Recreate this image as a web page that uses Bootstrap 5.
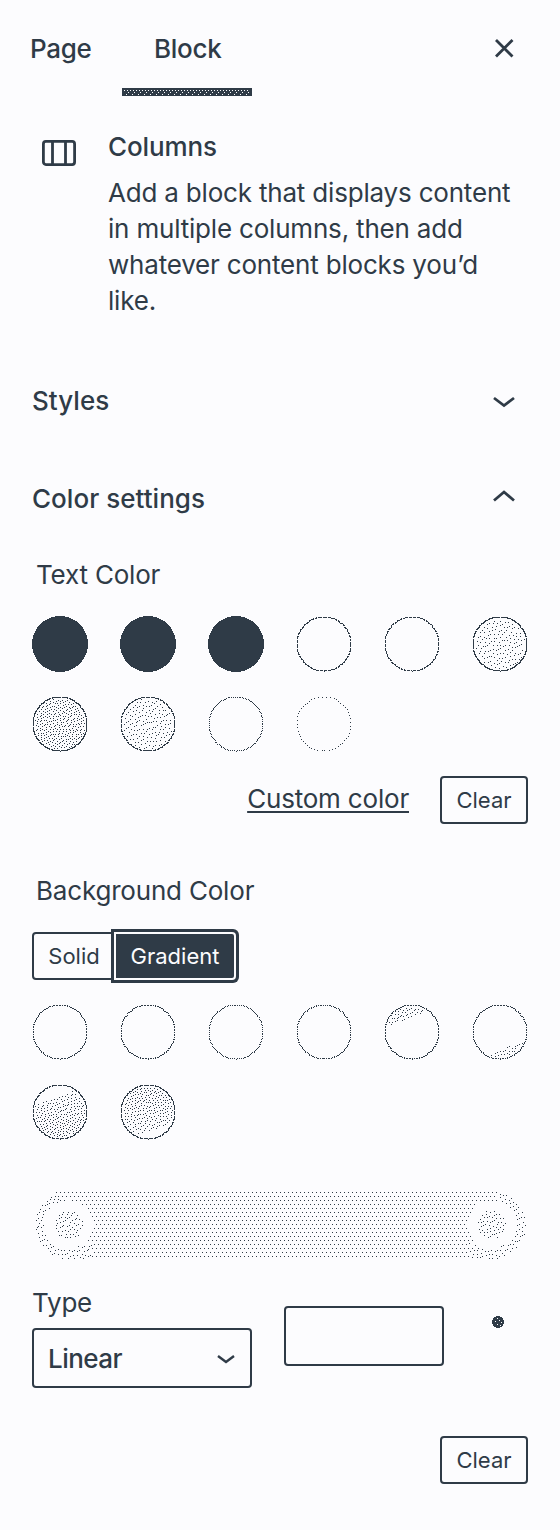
<!DOCTYPE html>
<html lang="en">
<head>
<meta charset="utf-8">
<meta name="viewport" content="width=device-width, initial-scale=1">
<title>Block settings</title>
<link href="https://cdn.jsdelivr.net/npm/bootstrap@5.3.0/dist/css/bootstrap.min.css" rel="stylesheet">
<style>
:root{--ink:#2f3b47;--paper:#fcfcfe}
body{background:var(--paper);color:var(--ink);font-family:Inter,"Liberation Sans",sans-serif;font-size:26px;line-height:36px;letter-spacing:-.19px;height:1530px;overflow:hidden}
svg{display:block;flex:none}
button{letter-spacing:inherit}
.semi{font-weight:500;letter-spacing:-.12px}
.tabs-top{height:96px}
.tab-item{background:none;border:0;color:inherit;height:96px;width:122px;padding:31px 0 0 30px;position:relative;display:flex;align-items:flex-start;letter-spacing:-.3px}
.tab-item.current{width:130px;padding-left:32px}
.tab-item svg{position:absolute;left:0;bottom:0}
.close-icon{margin:36px 44px 0 0}
.intro{padding:32px 32px 0 42px;height:255px;gap:32px}
.intro-title{padding-top:1px}
.panel-head{height:98px;padding:0 44px 0 32px;font-weight:500;letter-spacing:.03px}
.panel-head span{padding-top:2px}
.controls{padding:10px 32px 0}
.swatches{display:grid;grid-template-columns:repeat(6,56px);column-gap:32px;row-gap:24px}
.box{border:2px solid var(--ink);border-radius:4px;background:var(--paper);color:var(--ink)}
.btn-sm2{font-size:22px;line-height:44px;height:48px;padding:0;text-align:center;letter-spacing:0}
.clear-btn{width:88px}
.custom{text-decoration:underline;text-decoration-thickness:2px;text-underline-offset:3px;text-decoration-skip-ink:none;color:inherit}
.solid-btn{width:84px;border-radius:4px 0 0 4px}
.grad-btn{width:118px;height:44px;line-height:44px;margin:2px 0 0;border:0;background:var(--ink);color:var(--paper);border-radius:1px;box-shadow:0 0 0 2px var(--paper),0 0 0 5px var(--ink);position:relative}
.grad-btn{border-radius:0 2px 2px 0}
.type-select{width:220px;height:60px;padding:2px 14px 0;font-weight:450;letter-spacing:-.55px}
.angle-input{width:160px;height:60px;margin-top:21px}
</style>
</head>
<body>
<header class="tabs-top d-flex justify-content-between">
  <div class="d-flex" role="tablist">
    <button class="tab-item semi" role="tab">Page</button>
    <button class="tab-item current semi" role="tab">Block
      <svg width="130" height="8" shape-rendering="crispEdges"><defs><pattern id="speck" width="6" height="6" patternUnits="userSpaceOnUse"><path d="M2 2h1v1h-1zM5 2h1v1h-1zM0 4h1v1h-1zM4 0h1v1h-1z" fill="#fcfcfe"/></pattern></defs><path d="M0 0h130v8H0z" fill="#2f3b47"/><path d="M2 1h126v6H2z" fill="url(#speck)"/></svg>
    </button>
  </div>
  <svg class="close-icon" width="24" height="24" fill="none" stroke="#2f3b47" stroke-width="2.800"><path d="M4 4l16.500 16.500M20.500 4L4 20.500"/></svg>
</header>
<section class="intro d-flex">
  <svg class="mt-2" width="34" height="34" viewBox="0 0 34 34" fill="none" stroke="#2f3b47" stroke-width="2.800"><rect x="1.400" y="5.400" width="31.200" height="23.200" rx="2.500"/><path d="M10.500 5v24M23.500 5v24"/></svg>
  <div>
    <div class="semi intro-title">Columns</div>
    <p class="mb-0" style="margin-top:10px">Add a block that displays content<br>in multiple columns, then add<br>whatever content blocks you’d<br>like.</p>
  </div>
</section>
<section class="panel-head d-flex justify-content-between align-items-center"><span>Styles</span>
  <svg width="24" height="24" fill="none" stroke="#2f3b47" stroke-width="2.800"><path d="M2 10l10 7.500L22 10"/></svg></section>
<section class="panel-head d-flex justify-content-between align-items-center"><span>Color settings</span>
  <svg width="24" height="24" fill="none" stroke="#2f3b47" stroke-width="2.800"><path d="M2 14.500L12 6l10 8.500"/></svg></section>
<main class="controls">
  <div style="padding-left:4px;margin-bottom:23px">Text Color</div>
  <div class="swatches" id="textSwatches"></div>
  <div class="d-flex justify-content-end" style="margin-top:24px;gap:31px">
    <a class="custom" href="#" style="margin-top:5px">Custom color</a>
    <button class="box btn-sm2 clear-btn">Clear</button>
  </div>
  <div style="padding-left:4px;margin:49px 0 23px">Background Color</div>
  <div class="d-flex" style="height:48px">
    <button class="box btn-sm2 solid-btn">Solid</button>
    <button class="btn-sm2 grad-btn">Gradient</button>
  </div>
  <div class="swatches" id="bgSwatches" style="margin-top:24px"></div>
  <svg id="gradientBar" width="496" height="72" shape-rendering="crispEdges" style="margin-top:48px"></svg>
  <div class="d-flex" style="margin-top:25px">
    <div style="width:252px"><label class="d-block" for="gtype" style="margin-bottom:7px">Type</label>
      <button id="gtype" class="box type-select d-flex align-items-center justify-content-between">Linear
        <svg width="20" height="20" fill="none" stroke="#2f3b47" stroke-width="2.400"><path d="M2 7l8 6 8-6"/></svg></button></div>
    <input class="box angle-input" aria-label="Angle">
    <svg width="12" height="12" style="margin:31px 0 0 48px" shape-rendering="crispEdges"><circle cx="6" cy="6" r="6" fill="#2f3b47"/><path d="M5 2h1v1h-1zM3 5h1v1h-1zM7 4h1v1h-1zM9 6h1v1h-1zM5 8h1v1h-1zM8 9h1v1h-1z" fill="#fcfcfe"/></svg>
  </div>
  <div class="d-flex justify-content-end" style="margin-top:48px"><button class="box btn-sm2 clear-btn">Clear</button></div>
</main>
<script src="https://cdn.jsdelivr.net/npm/bootstrap@5.3.0/dist/js/bootstrap.bundle.min.js"></script>
<script>
// Small seeded generator keeps the stipple texture stable between loads.
let seed = 7;
const rnd = () => (seed = (seed * 1103515245 + 12345) % 2147483648) / 2147483648;
const dot = (x, y) => `M${x} ${y}h1v1h-1z`;
// Stipple a tone function with error diffusion; returns path data of 1px dots.
function stipple(w, h, tone) {
  const err = Array.from({length: h + 1}, () => new Float32Array(w + 2));
  let d = '';
  for (let y = 0; y < h; y++) for (let x = 0; x < w; x++) {
    const t = tone(x, y);
    if (t <= 0) continue;
    if (!err[y][x + 1]) err[y][x + 1] = rnd() * .4;
    const v = t + err[y][x + 1], on = v >= .28 + rnd() * .4 ? 1 : 0, e = v - on;
    if (on) d += dot(x, y);
    err[y][x + 2] += e * 7 / 16; err[y + 1][x] += e * 3 / 16;
    err[y + 1][x + 1] += e * 5 / 16; err[y + 1][x + 2] += e / 16;
  }
  return d;
}
function swatch(ring, fill) {
  const open = '<svg width="56" height="56" shape-rendering="crispEdges">';
  if (ring === 1) return open + '<circle cx="28" cy="28" r="28" fill="#2f3b47"/></svg>';
  let d = '', last = '', acc = 0;
  for (let a = 0; a < 720; a++) {
    const x = Math.round(27.5 + 27 * Math.cos(a * Math.PI / 360)), y = Math.round(27.5 + 27 * Math.sin(a * Math.PI / 360));
    if (last === x + ',' + y) continue;
    last = x + ',' + y;
    acc += ring + (rnd() - .5) * .15;
    if (acc >= 1) { acc -= 1; d += dot(x, y); }
  }
  d += stipple(56, 56, (x, y) => Math.hypot(x - 27.5, y - 27.5) < 25.5 ? fill(x, y) : 0);
  return open + `<path fill="#2f3b47" d="${d}"/></svg>`;
}
const flat = v => () => v;
textSwatches.innerHTML = [[1], [1], [1], [.78, flat(0)], [.75, flat(0)], [.92, flat(.075)],
  [.9, flat(.15)], [.8, flat(.08)], [.52, flat(0)], [.25, flat(0)]].map(a => swatch(...a)).join('');
const slope = (x, y) => y + x * .38;
bgSwatches.innerHTML = [[.62, flat(0)], [.64, flat(0)], [.53, flat(0)], [.58, flat(0)],
  [.66, (x, y) => slope(x, y) < 23 ? .12 : 0], [.62, (x, y) => slope(x, y) > 56 ? .11 : 0],
  [.82, (x, y) => slope(x, y) > 22 ? .09 + y * .0014 : 0], [.82, (x, y) => slope(x, y) < 58 ? .16 - y * .0014 : 0]].map(a => swatch(...a)).join('');
// Gradient track: even dot rows in the middle, stippled caps and handles.
let rows = '';
const near = (x, y) => Math.min(Math.hypot(x - 36, y - 36), Math.hypot(x - 459, y - 36));
for (let j = 0; j < 17; j++) for (let x = 28 + (j % 2) * 2; x < 466; x += 4) {
  const y = 4 + j * 4;
  if (near(x, y) > 24 && !(j > 12 && (x < 60 || x > 436))) rows += dot(x, y);
}
rows += stipple(496, 72, (x, y) => {
  const c = near(x, y);
  if (c < 15) return .085;
  if (c < 24) return 0;
  if (y > 54 && y < 71 && ((x > 27 && x < 60) || (x > 436 && x < 466))) return .075;
  if (c < 34.5 && (x < 28 || x > 465)) return .075;
  return 0;
});
gradientBar.innerHTML = `<path fill="#2f3b47" d="${rows}"/>`;
</script>
</body>
</html>
